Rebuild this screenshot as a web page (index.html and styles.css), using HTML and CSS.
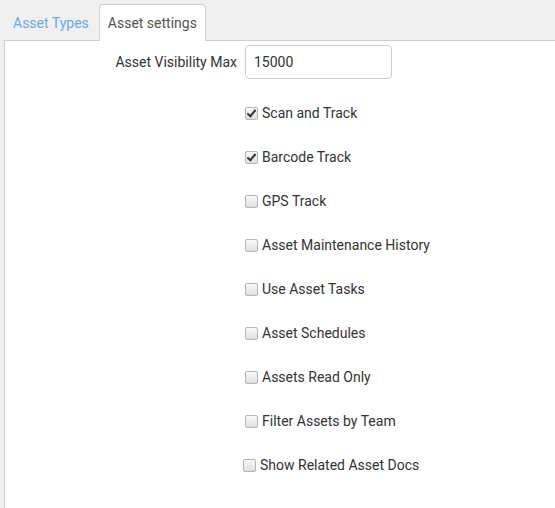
FILE: index.html
```html
<!DOCTYPE html>
<html>
<head>
<meta charset="utf-8">
<link rel="stylesheet" href="styles.css">
</head>
<body>
<div class="tabs">
  <a class="tab">Asset Types</a>
  <a class="tab active">Asset settings</a>
</div>
<div class="panel">
  <div class="field">
    <label class="field-label" for="vis">Asset Visibility Max</label>
    <input id="vis" class="text-input" type="text" value="15000">
  </div>
  <div class="checks">
    <label class="check"><input type="checkbox" checked><span>Scan and Track</span></label>
    <label class="check"><input type="checkbox" checked><span>Barcode Track</span></label>
    <label class="check"><input type="checkbox"><span>GPS Track</span></label>
    <label class="check"><input type="checkbox"><span>Asset Maintenance History</span></label>
    <label class="check"><input type="checkbox"><span>Use Asset Tasks</span></label>
    <label class="check"><input type="checkbox"><span>Asset Schedules</span></label>
    <label class="check"><input type="checkbox"><span>Assets Read Only</span></label>
    <label class="check"><input type="checkbox"><span>Filter Assets by Team</span></label>
    <label class="check shifted"><input type="checkbox"><span>Show Related Asset Docs</span></label>
  </div>
</div>
</body>
</html>
```
FILE: styles.css
```css
html, body {
  margin: 0;
  padding: 0;
  height: 100%;
}
body {
  background: #f0f0f0;
  font-family: Roboto, "Noto Sans", Arial, sans-serif;
  font-size: 14px;
  color: #333;
  display: flex;
  flex-direction: column;
  padding-left: 4px;
  box-sizing: border-box;
  overflow: hidden;
}
.tabs {
  display: flex;
  padding-top: 4px;
  height: 36px;
  position: relative;
  z-index: 1;
}
.tab {
  display: flex;
  align-items: center;
  padding: 0 9px 0 8px;
  color: #6ea8e6;
  border: 1px solid transparent;
  border-bottom: none;
  border-radius: 4px 4px 0 0;
  cursor: pointer;
}
.tab.active {
  color: #555;
  background: #fff;
  border-color: #d0d0d0;
  height: 36px;
  padding: 0 8px 0 8px;
  margin-bottom: -1px;
}
.panel {
  flex: 1;
  background: #fff;
  border-top: 1px solid #cfcfcf;
  border-left: 1px solid #cfcfcf;
  padding-top: 4px;
}
.field {
  display: flex;
  align-items: center;
  gap: 8px;
}
.field-label {
  width: 232px;
  text-align: right;
}
.text-input {
  width: 147px;
  height: 34px;
  box-sizing: border-box;
  border: 1px solid #ccc;
  border-radius: 4px;
  padding: 0 8px;
  font: inherit;
  color: #333;
  outline: none;
}
.checks {
  margin-top: 12px;
  padding-left: 239px;
}
.check {
  display: flex;
  align-items: center;
  height: 44px;
  gap: 4px;
}
.check.shifted {
  margin-left: -2px;
}
.check input {
  appearance: none;
  -webkit-appearance: none;
  width: 13px;
  height: 13px;
  margin: 0 0 0 1px;
  border: 1px solid #b5b5b5;
  border-radius: 2px;
  background: linear-gradient(#fafafa, #dedede);
  position: relative;
  box-sizing: border-box;
}
.check input:checked::after {
  content: "";
  position: absolute;
  left: 3px;
  top: 0px;
  width: 3px;
  height: 7px;
  border-right: 2px solid #333;
  border-bottom: 2px solid #333;
  transform: rotate(40deg);
}
```
